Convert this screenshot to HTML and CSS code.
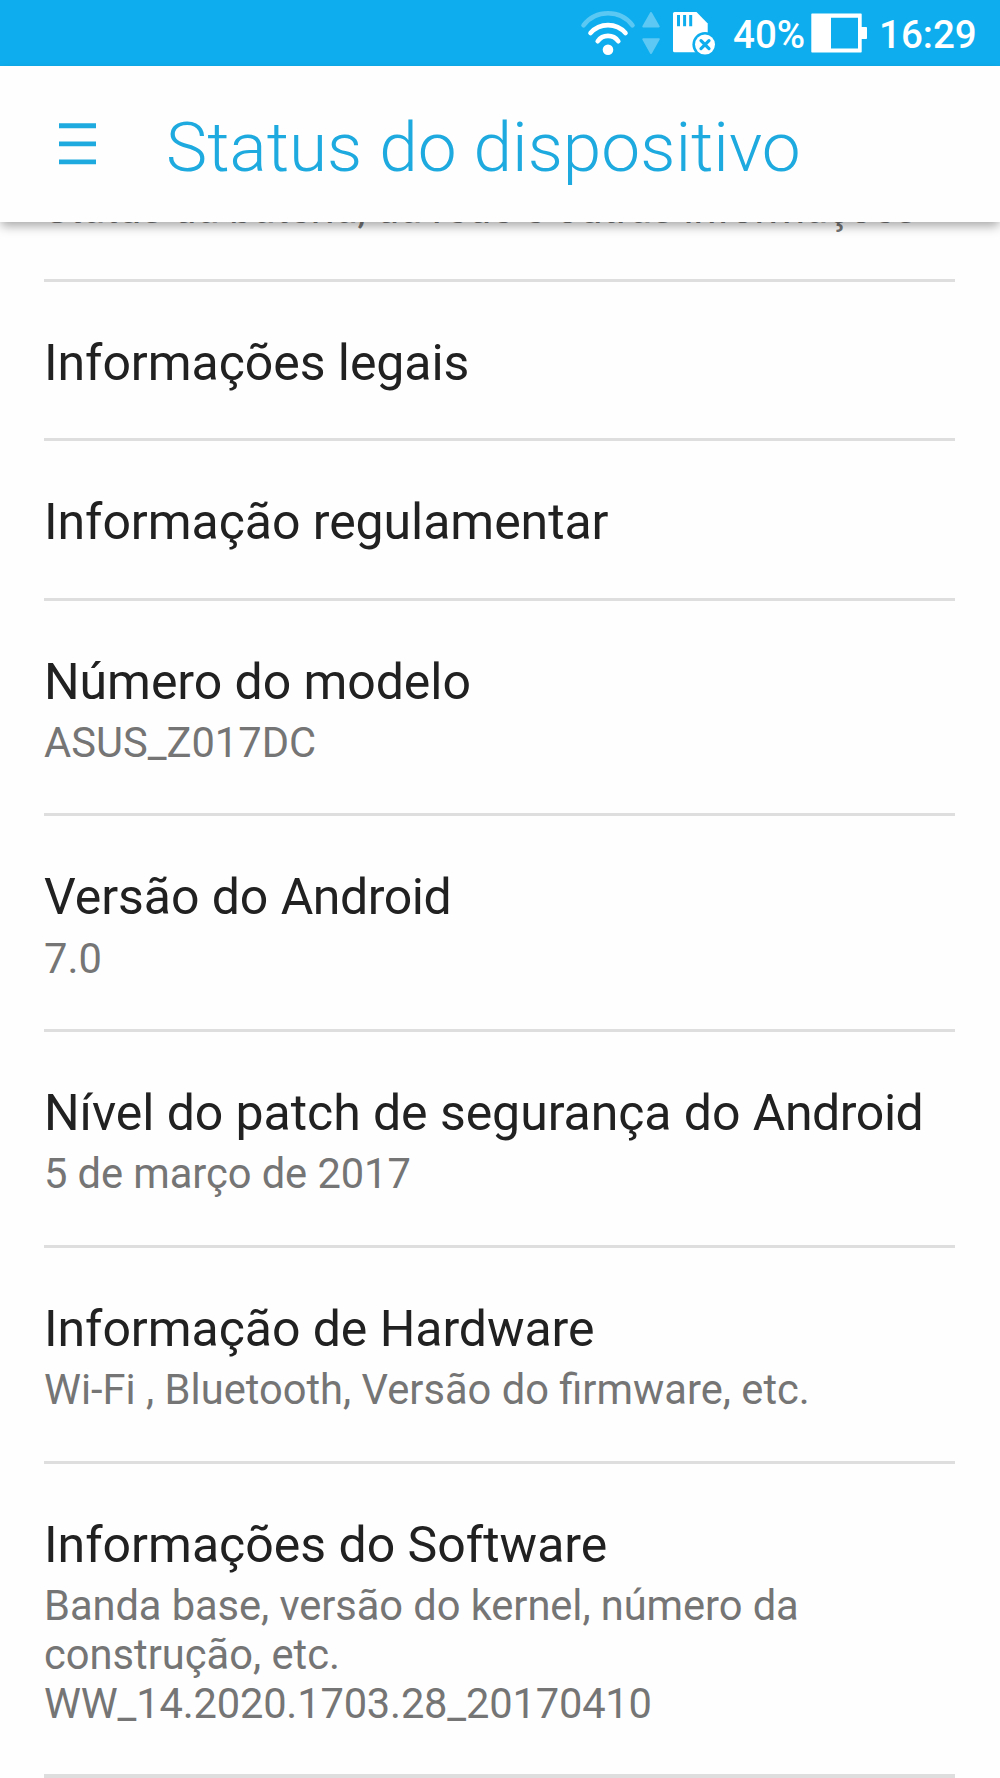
FILE: index.html
```html
<!DOCTYPE html>
<html lang="pt-BR">
<head>
<meta charset="utf-8">
<title>Status do dispositivo</title>
<link rel="stylesheet" href="styles.css">
</head>
<body>
<div class="screen">
  <div class="status-bar">
    <svg class="icon-wifi" viewBox="580 0 56 66" width="56" height="66" fill="none" stroke="#fff" stroke-width="4.6" stroke-linecap="round">
      <path d="M583.5 25.3A31 31 0 0 1 632.5 25.3" opacity=".32"/>
      <path d="M590.5 33A23.3 23.3 0 0 1 625.5 33"/>
      <path d="M597.7 41.2A12.6 12.6 0 0 1 618.3 41.2"/>
      <circle cx="608" cy="49.7" r="5.3" fill="#fff" stroke="none"/>
    </svg>
    <svg class="icon-data" viewBox="640 0 22 66" width="22" height="66">
      <g fill="#fff" stroke="#fff" stroke-width="2" stroke-linejoin="round" opacity=".32">
        <path d="M651 13L658.7 26.5H643.3Z"/>
        <path d="M651 53L658.7 39.2H643.3Z"/>
      </g>
    </svg>
    <svg class="icon-sd" viewBox="672 0 44 66" width="44" height="66">
      <path d="M674.5 12H696.5L707.7 23.5V52.3H674.5Q673 52.3 673 50.8V13.5Q673 12 674.5 12Z" fill="#fff"/>
      <path d="M678.5 15V26.3M684.6 15V26.3M690.7 15V26.3" stroke="#0eaeee" stroke-width="3"/>
      <circle cx="705" cy="44.6" r="12.6" fill="#0eaeee"/>
      <circle cx="705" cy="44.6" r="10" fill="#fff"/>
      <path d="M701 40.6L709 48.6M709 40.6L701 48.6" stroke="#0eaeee" stroke-width="3.2" stroke-linecap="round"/>
    </svg>
    <span class="battery-level">40%</span>
    <svg class="icon-battery" viewBox="811 0 57 66" width="57" height="66">
      <path fill="#fff" fill-rule="evenodd" d="M812 13.5H861Q861.7 13.5 861.7 14.2V27H866.2Q867 27 867 27.8V38.2Q867 39 866.2 39H861.7V51.8Q861.7 52.5 861 52.5H812Q811.3 52.5 811.3 51.8V14.2Q811.3 13.5 812 13.5ZM831 17.7V48.5H858V17.7Z"/>
    </svg>
    <span class="clock">16:29</span>
  </div>
  <header class="app-bar">
    <svg class="menu" viewBox="0 0 37 42" width="37" height="42" fill="#1eaadf">
      <path d="M0 .3H37V5.2H0ZM0 18.4H37V23.3H0ZM0 36.5H37V41.2H0Z"/>
    </svg>
    <h1 class="title">Status do dispositivo</h1>
  </header>
  <main class="list">
    <section class="row row-scrolled"><p class="summary snug">Status da bateria, da rede e outras informações</p></section>
    <section class="row single"><h2 class="name">Informações legais</h2></section>
    <section class="row single"><h2 class="name">Informação regulamentar</h2></section>
    <section class="row"><h2 class="name">Número do modelo</h2><p class="summary">ASUS_Z017DC</p></section>
    <section class="row"><h2 class="name">Versão do <span class="brand">Android</span></h2><p class="summary">7.0</p></section>
    <section class="row"><h2 class="name">Nível do patch de segurança do <span class="brand">Android</span></h2><p class="summary snug">5 de março de 2017</p></section>
    <section class="row"><h2 class="name">Informação de Hardware</h2><p class="summary">Wi-Fi , Bluetooth, Versão do firmware, etc.</p></section>
    <section class="row tall"><h2 class="name">Informações do Software</h2><p class="summary"><span class="snug">Banda base, versão do kernel, número da</span><br>construção, etc.<br><span class="build">WW_14.2020.1703.28_20170410</span></p></section>
  </main>
</div>
</body>
</html>
```
FILE: styles.css
```css
* { box-sizing: border-box; margin: 0; padding: 0; }

body {
  background: #fefefe;
  font-family: Roboto, "Liberation Sans", sans-serif;
}

.screen {
  display: flex;
  flex-direction: column;
  width: 1000px;
  height: 1778px;
  overflow: hidden;
}

.status-bar {
  display: flex;
  flex: none;
  align-items: center;
  justify-content: flex-end;
  height: 66px;
  padding-right: 23px;
  background: #0eaeee;
  color: #fff;
  font-size: 38.5px;
  font-weight: 500;
  line-height: 66px;
  white-space: nowrap;
}

.status-bar svg { flex: none; }
.icon-data { margin-left: 4px; }
.icon-sd { margin-left: 10px; }
.battery-level { width: 72px; margin: 3px 6px 0 17px; }
.clock { width: 98px; margin: 3px 0 0 11px; }

.app-bar {
  z-index: 1;
  display: flex;
  flex: none;
  align-items: center;
  gap: 70px;
  height: 156px;
  padding-left: 59px;
  background: #fefefe;
  box-shadow: 0 5px 10px -1px rgba(0, 0, 0, .34);
}

.title {
  color: #1eaadf;
  font-size: 69.4px;
  font-weight: 300;
  line-height: 80px;
  padding-top: 7px;
  white-space: nowrap;
}

.list {
  flex: none;
  padding: 0 45px 0 44px;
}

.row {
  height: 215.75px;
  padding-top: 52px;
  border-bottom: 3px solid #dedede;
}

.name {
  color: #212121;
  font-size: 50px;
  font-weight: 400;
  letter-spacing: -.06px;
  line-height: 59px;
  white-space: nowrap;
}

.brand { letter-spacing: -.45px; }

.summary {
  margin-top: 6.4px;
  color: #757575;
  font-size: 41.67px;
  line-height: 49px;
  white-space: nowrap;
}

.snug { letter-spacing: -.07px; }
.build { letter-spacing: -.18px; }

.row-scrolled {
  display: flow-root;
  height: 60px;
  padding-top: 0;
}

.row-scrolled .summary { margin-top: -38px; }
.single { height: 159.25px; }
.tall { height: 314.5px; border-bottom-width: 4px; }
.tall .name { letter-spacing: 0; }
```
